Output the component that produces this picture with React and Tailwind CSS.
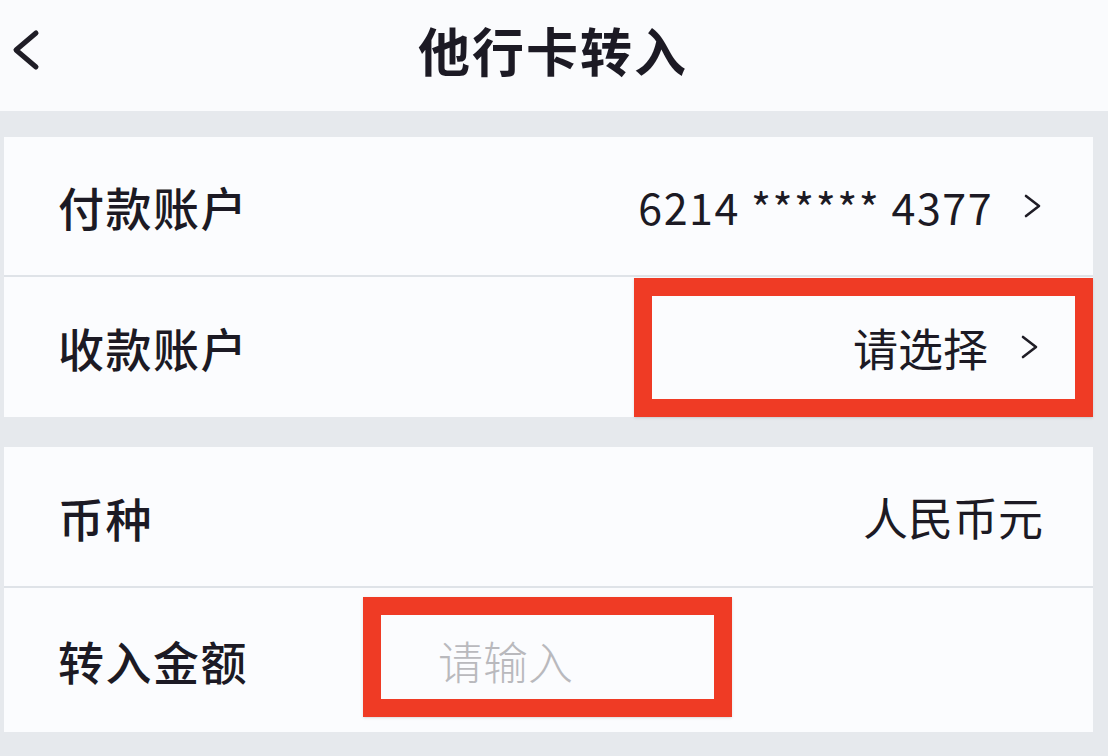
const font = { fontFamily: '"Noto Sans CJK SC", "Noto Sans", sans-serif' };

const Chevron = () => (
  <svg width="20" height="24" viewBox="0 0 20 24" className="shrink-0">
    <polyline points="3,2 16,12 3,22" fill="none" stroke="#1f1d26" strokeWidth="2.6" strokeLinecap="round" strokeLinejoin="round" />
  </svg>
);

const Row = ({ label, children, divider, className = '' }) => (
  <div className={`relative flex items-center px-[54px] ${divider ? 'border-b-2 border-[#dfe3e8]' : ''} ${className}`}>
    <span className="text-[46px] font-medium text-[#1c1a24] leading-none tracking-[1.5px]">{label}</span>
    {children}
  </div>
);

export default function App() {
  return (
    <div className="w-full h-[756px] bg-[#e6e9ed] flex flex-col overflow-hidden" style={font}>
      <div className="h-[111px] bg-[#fafbfd] flex items-center pb-[12px] relative shrink-0">
        <svg width="30" height="42" viewBox="0 0 30 42" className="ml-[11px]">
          <polyline points="25,4 5,21 25,38" fill="none" stroke="#1f1d26" strokeWidth="5" strokeLinecap="round" strokeLinejoin="round" />
        </svg>
        <div className="absolute inset-0 pb-[12px] flex items-center justify-center pointer-events-none">
          <span className="text-[52px] font-semibold text-[#1c1a24] leading-none tracking-[2px] ml-[-2px]">他行卡转入</span>
        </div>
      </div>

      <div className="mt-[26px] ml-[4px] mr-[15px] bg-[#fbfcfe]">
        <Row label="付款账户" divider className="h-[140px]">
          <div className="ml-auto flex items-center gap-[30px] mr-[-4px]">
            <span className="text-[43px] text-[#1c1a24] leading-none tracking-[1.5px]">6214 ****** 4377</span>
            <Chevron />
          </div>
        </Row>
        <Row label="收款账户" className="h-[140px]">
          <div className="ml-auto flex items-center gap-[32px] mr-[-1px]">
            <span className="text-[45px] text-[#1c1a24] leading-none">请选择</span>
            <Chevron />
          </div>
          <div className="absolute top-[1px] right-0 w-[459px] h-[139px] border-[18px] border-[#ef3b25] shadow-sm" />
        </Row>
      </div>

      <div className="mt-[30px] ml-[4px] mr-[15px] bg-[#fbfcfe]">
        <Row label="币种" divider className="h-[141px]">
          <span className="ml-auto text-[45px] text-[#1c1a24] leading-none mr-[-4px]">人民币元</span>
        </Row>
        <Row label="转入金额" className="h-[144px]">
          <span className="ml-[190px] text-[45px] text-[#b9b9bd] font-light leading-none">请输入</span>
          <div className="absolute top-[9px] left-[359px] w-[369px] h-[120px] border-[18px] border-[#ef3b25] shadow-sm" />
        </Row>
      </div>
    </div>
  );
}
